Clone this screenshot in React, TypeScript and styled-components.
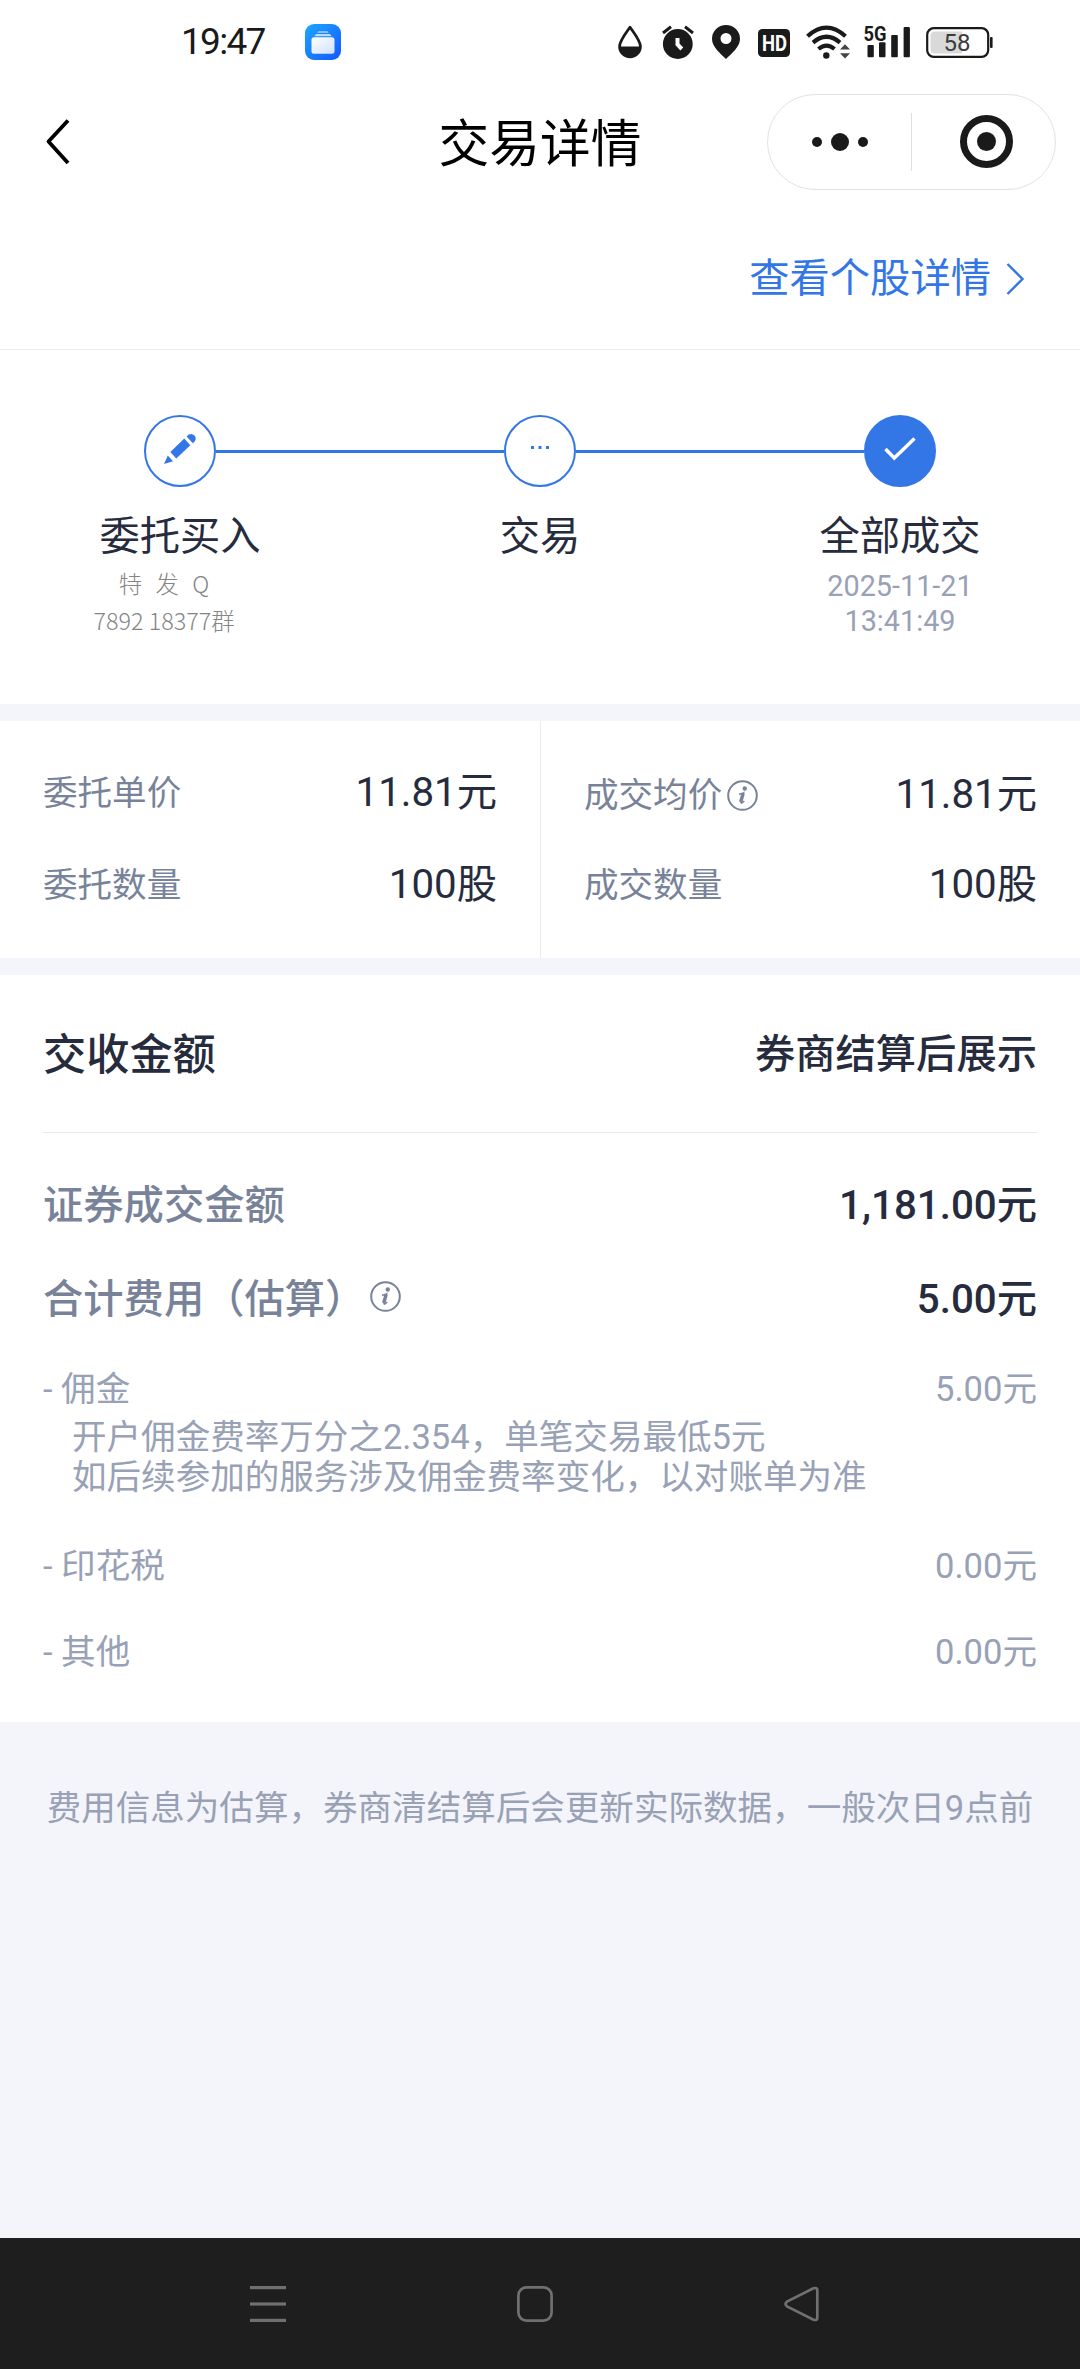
import React from "react";
import styled, { createGlobalStyle } from "styled-components";

const ink = "#262c3d";
const slate = "#78839a";
const mist = "#98a1b5";
const blue = "#3377e6";
const line = "#e9eaec";
const band = "#f4f5fa";

const GlobalStyle = createGlobalStyle`
  * { box-sizing: border-box; }
  body {
    margin: 0;
    background: ${band};
    font-family: Roboto, "Noto Sans CJK SC", sans-serif;
    -webkit-font-smoothing: antialiased;
  }
  svg { display: block; flex: none; overflow: visible; }
`;

const Screen = styled.div`
  width: 1080px;
  height: 2369px;
  display: flex;
  flex-direction: column;
  background: ${band};
  color: ${ink};
  white-space: nowrap;
`;

/* ---------- status bar ---------- */

const StatusBar = styled.div`
  height: 83px;
  padding: 0 87px 0 181px;
  display: flex;
  align-items: center;
  background: #fff;
`;

const Clock = styled.span`
  width: 124px;
  font-size: 37px;
  line-height: 40px;
  letter-spacing: -1.7px;
  color: #1a1a1a;
`;

const StatusIcons = styled.div`
  margin-left: auto;
  display: flex;
  align-items: center;
  gap: 14px;
`;

function AppBadge() {
  return (
    <svg width="36" height="36" viewBox="0 0 36 36">
      <defs>
        <linearGradient id="badge" x1="0" y1="0" x2="1" y2="1">
          <stop offset="0" stopColor="#1ea7ff" />
          <stop offset="1" stopColor="#1257ff" />
        </linearGradient>
        <linearGradient id="card" x1="0" y1="0" x2="1" y2="1">
          <stop offset="0" stopColor="#fff" />
          <stop offset="1" stopColor="#cfe0ff" />
        </linearGradient>
      </defs>
      <rect width="36" height="36" rx="9" fill="url(#badge)" />
      <path d="M13.5 7h9l1.2 2h-11.4z" fill="#7fc2ff" />
      <path d="M11 10h14l1.6 2.3H9.4z" fill="#b9dcff" />
      <rect x="6.5" y="13.3" width="23" height="16.5" rx="2.5" fill="url(#card)" />
    </svg>
  );
}

function StatusGlyphs() {
  const c = "#1a1a1a";
  return (
    <StatusIcons>
      <svg width="31" height="34" viewBox="0 0 31 34">
        <path d="M13 2.2C9 8 2.6 15.5 2.6 21.5a10.4 10.4 0 0 0 20.8 0C23.4 15.5 17 8 13 2.2z" fill="none" stroke={c} strokeWidth="2.8" strokeLinejoin="round" />
        <path d="M2.2 21.5h21.6A10.8 10.8 0 0 1 2.2 21.5z" fill={c} />
      </svg>
      <svg width="36" height="34" viewBox="0 0 36 34">
        <circle cx="15.8" cy="19" r="14.9" fill={c} />
        <path d="M1 8L9 1.8M31 8L23 1.8" stroke={c} strokeWidth="3" />
        <path d="M15.5 13v6.500l4.300 4.500" fill="none" stroke="#fff" strokeWidth="4" />
      </svg>
      <svg width="32" height="34" viewBox="0 0 32 34">
        <path fillRule="evenodd" d="M14 0A14 14 0 0 1 28 14c0 8-9 15-14 20C9 29 0 22 0 14A14 14 0 0 1 14 0zm0 8a5.500 5.500 0 1 0 0 11 5.500 5.500 0 0 0 0-11z" fill={c} />
      </svg>
      <svg width="34" height="34" viewBox="0 0 34 34">
        <rect x="0" y="4" width="32" height="28" rx="4.500" fill={c} />
        <text x="4" y="26" fontSize="22.500" fontWeight="700" fill="#fff" textLength="25" lengthAdjust="spacingAndGlyphs">HD</text>
      </svg>
      <svg width="44" height="34" viewBox="0 0 44 34">
        <g fill="none" stroke={c} strokeWidth="4.200">
          <path d="M1.500 11.200Q20.500-6 39.500 11.200" />
          <path d="M7 17.600Q20.500 6 34 17.600" />
          <path d="M12.500 24Q20.500 17.300 28.500 24" />
        </g>
        <circle cx="20.300" cy="30.500" r="3.200" fill={c} />
        <path d="M34 24.500l5-5.300 5 5.300zM34 28.200h10L39 33.500z" fill="#444" />
      </svg>
      <svg width="48" height="34" viewBox="0 0 48 34">
        <text x="-.5" y="15.500" fontSize="21" fontWeight="700" fill={c} textLength="23" lengthAdjust="spacingAndGlyphs">5G</text>
        <g fill={c}>
          <rect x="3.500" y="20" width="6.300" height="12.300" rx="1" />
          <rect x="15" y="17.300" width="6.500" height="15" rx="1" />
          <rect x="27.200" y="10" width="6.600" height="22.300" rx="1" />
          <rect x="39.600" y="2" width="6.300" height="30.300" rx="1" />
        </g>
      </svg>
      <svg width="67" height="34" viewBox="0 0 67 34">
        <rect x="1.200" y="3.200" width="61" height="28.600" rx="6.500" fill="none" stroke={c} strokeWidth="2.200" />
        <path d="M9 6.500h27v22H9q-4.500 0-4.500-4.500V11q0-4.500 4.500-4.500z" fill="#d9d9d9" />
        <rect x="64" y="12" width="2.600" height="11" rx="1" fill={c} />
        <text x="17.500" y="26" fontSize="24" fill="#3c3c3c">58</text>
      </svg>
    </StatusIcons>
  );
}

/* ---------- title bar ---------- */

const TitleBar = styled.header`
  height: 117px;
  padding: 0 24px;
  display: grid;
  grid-template-columns: 1fr auto 1fr;
  align-items: center;
  background: #fff;
`;

const Back = styled.div`
  padding-left: 22px;
`;

const Title = styled.h1`
  margin: 7px 0 0;
  font-size: 50.7px;
  line-height: 60px;
  font-weight: 400;
  color: #000;
`;

const Capsule = styled.div`
  justify-self: end;
  width: 289px;
  height: 96px;
  border: 1px solid #e2e2e2;
  border-radius: 48px;
  display: flex;
  align-items: center;
`;

const CapsuleButton = styled.div<{ $inset?: number }>`
  flex: 1 1 0;
  min-width: 0;
  height: 58px;
  display: flex;
  align-items: center;
  justify-content: center;
  & + & { border-left: 1px solid #dfdfdf; }
  svg { margin-left: ${(p) => p.$inset ?? 0}px; }
`;

/* ---------- link row ---------- */

const LinkRow = styled.div`
  height: 150px;
  padding: 8px 56px 0 0;
  display: flex;
  align-items: center;
  justify-content: flex-end;
  gap: 15px;
  background: #fff;
  border-bottom: 1px solid ${line};
  font-size: 40.3px;
  line-height: 48px;
  color: ${blue};
`;

/* ---------- stepper ---------- */

const Stepper = styled.section`
  height: 354px;
  padding-top: 65px;
  display: grid;
  grid-template-columns: repeat(3, 1fr);
  background: #fff;
`;

const Step = styled.div`
  display: flex;
  flex-direction: column;
  align-items: center;
`;

const Track = styled.div`
  width: 100%;
  display: flex;
  align-items: center;
`;

const Rail = styled.div<{ $on: boolean }>`
  flex: 1;
  height: 3px;
  background: ${(p) => (p.$on ? blue : "transparent")};
`;

const Dot = styled.div<{ $filled?: boolean }>`
  width: 72px;
  height: 72px;
  border-radius: 50%;
  border: 2px solid ${blue};
  background: ${(p) => (p.$filled ? blue : "#fff")};
  display: flex;
  align-items: center;
  justify-content: center;
  padding-bottom: 5px;
`;

const StepName = styled.div`
  margin-top: 26px;
  font-size: 40.3px;
  line-height: 48px;
`;

const StepTime = styled.div`
  margin-top: 8px;
  font-size: 28.8px;
  line-height: 35px;
  text-align: center;
  color: ${mist};
`;

const StepNote = styled.div`
  margin: 4px 32px 0 0;
  font-family: "Noto Sans CJK SC", sans-serif;
  font-weight: 300;
  font-size: 23.4px;
  line-height: 36.5px;
  text-align: center;
  color: #858585;
`;

const Spaced = styled.div`
  word-spacing: 8.2px;
`;

/* ---------- prices ---------- */

const Prices = styled.section`
  margin-top: 17px;
  height: 237px;
  display: grid;
  grid-template-columns: 1fr 1fr;
  background: #fff;
`;

const PriceColumn = styled.div<{ $first: number }>`
  padding: ${(p) => p.$first}px 43px 0;
  & + & { border-left: 1px solid ${line}; }
`;

const PriceRow = styled.div<{ $gap?: number }>`
  height: 50px;
  margin-bottom: ${(p) => p.$gap ?? 0}px;
  display: flex;
  align-items: center;
  justify-content: space-between;
`;

const Label = styled.span`
  display: flex;
  align-items: center;
  gap: 5px;
  font-size: 34.56px;
  line-height: 50px;
  color: ${slate};
`;

const Value = styled.span`
  font-size: 40.3px;
  line-height: 50px;
`;

/* ---------- settlement ---------- */

const Settlement = styled.section`
  margin-top: 17px;
  height: 747px;
  padding: 0 43px;
  background: #fff;
`;

const Heading = styled.div`
  height: 158px;
  padding-bottom: 6px;
  display: flex;
  align-items: center;
  justify-content: space-between;
  border-bottom: 1px solid ${line};
  font-size: 40.3px;
  font-weight: 500;
`;

const HeadingName = styled.span`
  font-size: 43.2px;
`;

const Sums = styled.div`
  padding-top: 21px;
`;

const SumRow = styled.div`
  height: 94px;
  display: flex;
  align-items: center;
  justify-content: space-between;
  font-size: 40.3px;
  font-weight: 500;
`;

const SumLabel = styled.span`
  display: flex;
  align-items: center;
  gap: 5px;
  color: ${slate};
  svg { margin-top: 3px; }
`;

const FeeRow = styled.div<{ $top: number }>`
  height: 62px;
  margin-top: ${(p) => p.$top}px;
  display: flex;
  align-items: center;
  justify-content: space-between;
  font-size: 34.56px;
  color: ${mist};
`;

const FeeNote = styled.p`
  margin: 0;
  padding-left: 29px;
  font-size: 34.56px;
  line-height: 40px;
  color: ${mist};
`;

const Footnote = styled.p`
  flex: 1;
  margin: 0;
  padding: 61px 0 0;
  text-align: center;
  font-size: 34.56px;
  line-height: 50px;
  color: ${mist};
`;

/* ---------- system navigation ---------- */

const SystemNav = styled.nav`
  height: 131px;
  padding: 0 261px 0 250px;
  display: flex;
  align-items: center;
  justify-content: space-between;
  background: #1e1e1e;
`;

function InfoIcon() {
  return (
    <svg width="31" height="31" viewBox="0 0 31 31">
      <circle cx="15.5" cy="15.5" r="14.3" fill="none" stroke={slate} strokeWidth="2" />
      <circle cx="17.8" cy="8.5" r="2.2" fill={slate} />
      <path d="M12 14.200q2.500-.3 4.600-1.400L14.200 21.500q-.5 2 .5 1.600 1.300-.5 2.600-2.200" fill="none" stroke={slate} strokeWidth="1.500" />
      <path d="M16.200 13.200L13.700 22" stroke={slate} strokeWidth="3.400" />
    </svg>
  );
}

export default function App() {
  return (
    <>
      <GlobalStyle />
      <Screen>
        <StatusBar>
          <Clock>19:47</Clock>
          <AppBadge />
          <StatusGlyphs />
        </StatusBar>

        <TitleBar>
          <Back>
            <svg width="24" height="46" viewBox="0 0 24 46">
              <path d="M22 1.500L2.500 22.500 22 44" fill="none" stroke="#000" strokeWidth="3.800" strokeLinejoin="round" />
            </svg>
          </Back>
          <Title>交易详情</Title>
          <Capsule>
            <CapsuleButton>
              <svg width="56" height="18" viewBox="0 0 56 18" fill="#1a1a1a">
                <circle cx="5" cy="9" r="5" />
                <circle cx="28" cy="9" r="9" />
                <circle cx="51" cy="9" r="5" />
              </svg>
            </CapsuleButton>
            <CapsuleButton $inset={5}>
              <svg width="53" height="53" viewBox="0 0 53 53">
                <circle cx="26.500" cy="26.500" r="23" fill="none" stroke="#1a1a1a" strokeWidth="7" />
                <circle cx="26.500" cy="26.500" r="9.500" fill="#1a1a1a" />
              </svg>
            </CapsuleButton>
          </Capsule>
        </TitleBar>

        <LinkRow>
          <span>查看个股详情</span>
          <svg width="18" height="32" viewBox="0 0 18 32">
            <path d="M1.500 1L16.500 16 1.500 31" fill="none" stroke={blue} strokeWidth="2.400" />
          </svg>
        </LinkRow>

        <Stepper>
          <Step>
            <Track>
              <Rail $on={false} />
              <Dot>
                <svg width="32" height="32" viewBox="0 0 32 32" fill={blue}>
                  <path d="M24.800 1.600a4.600 4.600 0 0 1 6 6.600L28.800 10.200 22.600 3.600z" />
                  <path d="M20.300 5.600L26.300 12.200 12.300 25.500 6.300 19z" />
                  <path d="M3.800 22.500L9 28.300 0 31z" />
                </svg>
              </Dot>
              <Rail $on />
            </Track>
            <StepName>委托买入</StepName>
            <StepNote>
              <Spaced>特 发 Q</Spaced>
              <div>7892 18377群</div>
            </StepNote>
          </Step>
          <Step>
            <Track>
              <Rail $on />
              <Dot>
                <svg width="18" height="5" viewBox="0 0 18 5" fill={blue}>
                  <rect x="0" y="0" width="3" height="3" />
                  <rect x="7.500" y="0" width="3" height="3" />
                  <rect x="15" y="0" width="3" height="3" />
                </svg>
              </Dot>
              <Rail $on />
            </Track>
            <StepName>交易</StepName>
          </Step>
          <Step>
            <Track>
              <Rail $on />
              <Dot $filled>
                <svg width="32" height="24" viewBox="0 0 32 24">
                  <path d="M1.500 12L10.300 21 30.500 1.500" fill="none" stroke="#fff" strokeWidth="3.400" />
                </svg>
              </Dot>
              <Rail $on={false} />
            </Track>
            <StepName>全部成交</StepName>
            <StepTime>
              2025-11-21
              <br />
              13:41:49
            </StepTime>
          </Step>
        </Stepper>

        <Prices>
          <PriceColumn $first={47}>
            <PriceRow $gap={42}>
              <Label>委托单价</Label>
              <Value>11.81元</Value>
            </PriceRow>
            <PriceRow>
              <Label>委托数量</Label>
              <Value>100股</Value>
            </PriceRow>
          </PriceColumn>
          <PriceColumn $first={49}>
            <PriceRow $gap={40}>
              <Label>
                成交均价
                <InfoIcon />
              </Label>
              <Value>11.81元</Value>
            </PriceRow>
            <PriceRow>
              <Label>成交数量</Label>
              <Value>100股</Value>
            </PriceRow>
          </PriceColumn>
        </Prices>

        <Settlement>
          <Heading>
            <HeadingName>交收金额</HeadingName>
            <span>券商结算后展示</span>
          </Heading>
          <Sums>
            <SumRow>
              <SumLabel>证券成交金额</SumLabel>
              <span>1,181.00元</span>
            </SumRow>
            <SumRow>
              <SumLabel>
                合计费用（估算）
                <InfoIcon />
              </SumLabel>
              <span>5.00元</span>
            </SumRow>
          </Sums>
          <FeeRow $top={13}>
            <span>- 佣金</span>
            <span>5.00元</span>
          </FeeRow>
          <FeeNote>
            开户佣金费率万分之2.354，单笔交易最低5元
            <br />
            如后续参加的服务涉及佣金费率变化，以对账单为准
          </FeeNote>
          <FeeRow $top={35}>
            <span>- 印花税</span>
            <span>0.00元</span>
          </FeeRow>
          <FeeRow $top={24}>
            <span>- 其他</span>
            <span>0.00元</span>
          </FeeRow>
        </Settlement>

        <Footnote>费用信息为估算，券商清结算后会更新实际数据，一般次日9点前</Footnote>

        <SystemNav>
          <svg width="36" height="36" viewBox="0 0 36 36" fill="#707070">
            <rect y="0" width="36" height="3.200" />
            <rect y="16.400" width="36" height="3.200" />
            <rect y="32.800" width="36" height="3.200" />
          </svg>
          <svg width="36" height="36" viewBox="0 0 36 36">
            <rect x="1.400" y="1.400" width="33.200" height="33.200" rx="8" fill="none" stroke="#707070" strokeWidth="2.700" />
          </svg>
          <svg width="35" height="36" viewBox="0 0 35 36">
            <path d="M29.500 2.300L3 15.600q-3 2.400 0 4.800L29.500 33.700q3.800 1.200 3.800-2.200V4.500q0-3.400-3.800-2.200z" fill="none" stroke="#707070" strokeWidth="2.700" />
          </svg>
        </SystemNav>
      </Screen>
    </>
  );
}
